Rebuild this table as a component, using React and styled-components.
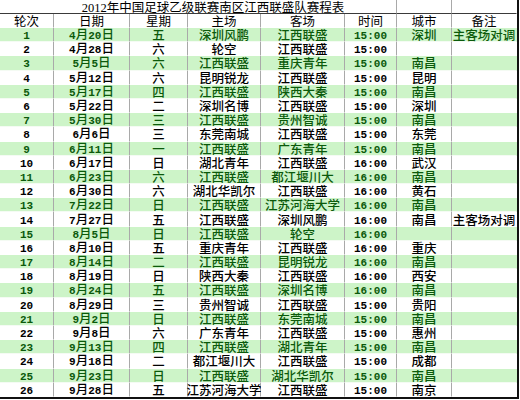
import React from 'react'
import styled, { createGlobalStyle } from 'styled-components'

const GlobalStyle = createGlobalStyle`
  html, body {
    margin: 0;
    padding: 0;
    background: #fff;
  }
`

const GRID = '#a9a9a9'
const GREEN = '#cdf4c8'
const GREEN_TEXT = '#0b5a0b'

const Sheet = styled.div`
  display: grid;
  grid-template-columns: 54px 76px 58px 73px 84px 52px 55px 65px;
  grid-template-rows: 14px 14px repeat(26, 14.2px);
  width: 517px;
  border-right: 2px solid #111;
  border-bottom: 2px solid #111;
  font-family: "Noto Sans CJK SC", sans-serif;
  font-size: 12.5px;
  font-weight: 500;
  color: #000;
`

const Cell = styled.div`
  box-sizing: border-box;
  display: flex;
  align-items: center;
  justify-content: center;
  white-space: nowrap;
  line-height: 14px;
  border-right: 1px solid ${({ $last }) => ($last ? 'transparent' : GRID)};
  border-bottom: 1px solid ${({ $green }) => ($green ? '#f4fbf3' : 'transparent')};
  background: ${({ $green }) => ($green ? GREEN : '#fff')};
  color: ${({ $green }) => ($green ? GREEN_TEXT : '#000')};
`

const TitleCell = styled(Cell)`
  grid-column: span ${({ $span }) => $span || 1};
  padding-left: ${({ $pad }) => $pad || 0}px;
  border-bottom: 1px solid #3a3a3a;
  font-weight: 400;
`

const HeadCell = styled(Cell)`
  font-weight: 400;
`

const Label = styled.span`
  display: inline-block;
  padding-top: 1px;
`

const Num = styled.span`
  font-family: ${({ $serif }) => ($serif ? '"Liberation Serif", serif' : '"Liberation Mono", monospace')};
  font-weight: ${({ $serif }) => ($serif ? 400 : 700)};
  font-size: ${({ $serif }) => ($serif ? '12.5px' : '11px')};
`

const mixed = (text, serif) =>
  text.split(/([0-9:]+)/).map((part, i) =>
    /[0-9]/.test(part) ? (
      <Num key={i} $serif={serif}>
        {part}
      </Num>
    ) : (
      part
    )
  )

const headers = ['轮次', '日期', '星期', '主场', '客场', '时间', '城市', '备注']

const rows = [
  ['1', '4月20日', '五', '深圳风鹏', '江西联盛', '15:00', '深圳', '主客场对调'],
  ['2', '4月28日', '六', '轮空', '江西联盛', '15:00', '', ''],
  ['3', '5月5日', '六', '江西联盛', '重庆青年', '15:00', '南昌', ''],
  ['4', '5月12日', '六', '昆明锐龙', '江西联盛', '15:00', '昆明', ''],
  ['5', '5月17日', '四', '江西联盛', '陕西大秦', '15:00', '南昌', ''],
  ['6', '5月22日', '二', '深圳名博', '江西联盛', '15:00', '深圳', ''],
  ['7', '5月30日', '三', '江西联盛', '贵州智诚', '15:00', '南昌', ''],
  ['8', '6月6日', '三', '东莞南城', '江西联盛', '15:00', '东莞', ''],
  ['9', '6月11日', '一', '江西联盛', '广东青年', '15:00', '南昌', ''],
  ['10', '6月17日', '日', '湖北青年', '江西联盛', '16:00', '武汉', ''],
  ['11', '6月23日', '六', '江西联盛', '都江堰川大', '16:00', '南昌', ''],
  ['12', '6月30日', '六', '湖北华凯尔', '江西联盛', '16:00', '黄石', ''],
  ['13', '7月22日', '日', '江西联盛', '江苏河海大学', '16:00', '南昌', ''],
  ['14', '7月27日', '五', '江西联盛', '深圳风鹏', '16:00', '南昌', '主客场对调'],
  ['15', '8月5日', '日', '江西联盛', '轮空', '16:00', '', ''],
  ['16', '8月10日', '五', '重庆青年', '江西联盛', '16:00', '重庆', ''],
  ['17', '8月14日', '二', '江西联盛', '昆明锐龙', '16:00', '南昌', ''],
  ['18', '8月19日', '日', '陕西大秦', '江西联盛', '16:00', '西安', ''],
  ['19', '8月24日', '五', '江西联盛', '深圳名博', '16:00', '南昌', ''],
  ['20', '8月29日', '三', '贵州智诚', '江西联盛', '15:00', '贵阳', ''],
  ['21', '9月2日', '日', '江西联盛', '东莞南城', '15:00', '南昌', ''],
  ['22', '9月8日', '六', '广东青年', '江西联盛', '15:00', '惠州', ''],
  ['23', '9月13日', '四', '江西联盛', '湖北青年', '15:00', '南昌', ''],
  ['24', '9月18日', '二', '都江堰川大', '江西联盛', '15:00', '成都', ''],
  ['25', '9月23日', '日', '江西联盛', '湖北华凯尔', '15:00', '南昌', ''],
  ['26', '9月28日', '五', '江苏河海大学', '江西联盛', '15:00', '南京', ''],
]

export default function App() {
  return (
    <>
      <GlobalStyle />
      <Sheet>
        <TitleCell $span={6} $pad={30}>
          <Label>{mixed('2012年中国足球乙级联赛南区江西联盛队赛程表', true)}</Label>
        </TitleCell>
        <TitleCell />
        <TitleCell $last />

        {headers.map((h, i) => (
          <HeadCell key={h} $last={i === headers.length - 1}>
            <Label>{h}</Label>
          </HeadCell>
        ))}

        {rows.map((row, r) =>
          row.map((value, c) => (
            <Cell key={`${r}-${c}`} $green={r % 2 === 0} $last={c === row.length - 1}>
              <Label>{mixed(value)}</Label>
            </Cell>
          ))
        )}
      </Sheet>
    </>
  )
}
